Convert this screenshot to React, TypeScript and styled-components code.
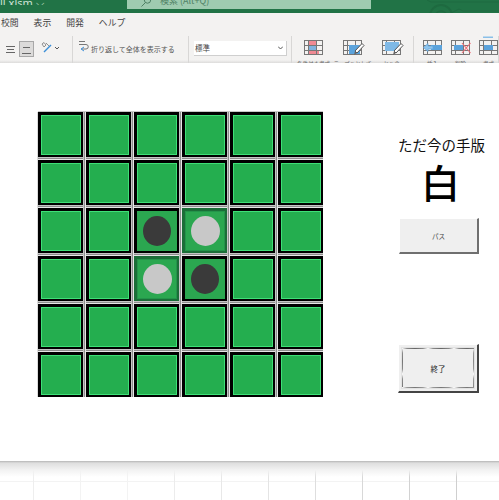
import React from "react";
import styled, { createGlobalStyle } from "styled-components";

const Global = createGlobalStyle`
  html, body { margin: 0; padding: 0; background: #fff; }
  body { width: 499px; height: 500px; overflow: hidden; font-family: "Noto Sans CJK JP", "Liberation Sans", sans-serif; }
`;

const Page = styled.div`
  width: 499px;
  height: 500px;
  display: flex;
  flex-direction: column;
  overflow: hidden;
`;

const TitleBar = styled.div`
  height: 13px;
  flex: none;
  background: #217346;
  display: flex;
  overflow: hidden;
  position: relative;
`;

const TitlePattern = styled.svg`
  position: absolute;
  right: 0;
  top: 0;
`;

const FileName = styled.div`
  width: 127px;
  flex: none;
  color: #cfe3d6;
  font: 11px/6px "Noto Sans", sans-serif;
  height: 5px;
  overflow: hidden;
  white-space: nowrap;
`;

const SearchBox = styled.div`
  width: 244px;
  height: 9px;
  flex: none;
  background: #9fcbb0;
  display: flex;
  gap: 8px;
  padding-left: 13px;
  box-sizing: border-box;
  overflow: hidden;
  color: #4f8165;
  font: 9px/9px "Noto Sans CJK JP", sans-serif;
  white-space: nowrap;
`;

const SearchText = styled.span`
  margin-top: -4px;
`;

const TabsRow = styled.div`
  height: 23px;
  flex: none;
  background: #f3f2f1;
  display: flex;
  align-items: center;
  padding: 0 0 3px 1px;
  box-sizing: border-box;
  gap: 15px;
`;

const Tab = styled.span`
  font-size: 8.8px;
  line-height: 12px;
  color: #444;
`;

const Ribbon = styled.div`
  height: 27px;
  flex: none;
  display: flex;
  align-items: stretch;
  background: linear-gradient(#f3f2f1 24px, #dddcdb 27px);
  overflow: hidden;
`;

const RibbonGroup = styled.div<{ $w: number; $gap?: number; $pad?: number }>`
  width: ${(p) => p.$w}px;
  flex: none;
  display: flex;
  align-items: flex-start;
  gap: ${(p) => p.$gap ?? 0}px;
  padding: 4px 0 0 ${(p) => p.$pad ?? 0}px;
  box-sizing: border-box;
  border-right: 1px solid #d8d7d6;
`;

const AlignButton = styled.div<{ $active?: boolean }>`
  width: 15px;
  height: 16px;
  margin-top: 1px;
  box-sizing: border-box;
  border: 1px solid ${(p) => (p.$active ? "#a8a8a8" : "transparent")};
  background: ${(p) => (p.$active ? "#dcdbda" : "transparent")};
  display: flex;
  align-items: ${(p) => (p.$active ? "flex-end" : "center")};
  padding-bottom: ${(p) => (p.$active ? 2 : 0)}px;
  justify-content: center;
`;

const WrapLabel = styled.span`
  font-size: 7px;
  line-height: 10px;
  color: #555;
  white-space: nowrap;
  margin: 4px 0 0 3px;
`;

const FormatBox = styled.div`
  width: 93px;
  height: 15px;
  margin: 1px 0 0 5px;
  background: #fff;
  border: 1px solid #cfcfcf;
  border-width: 0 1px 1px 0;
  box-sizing: border-box;
  font-size: 7.5px;
  line-height: 14px;
  color: #444;
  padding: 0 3px 0 1px;
  display: flex;
  justify-content: space-between;
  align-items: center;
`;

const CommandItem = styled.div`
  width: 19px;
  flex: none;
  display: flex;
  flex-direction: column;
  align-items: center;
`;

const CommandLabel = styled.span`
  font-size: 5.5px;
  line-height: 8px;
  margin-top: 5px;
  color: #666;
  white-space: nowrap;
`;

const RibbonIcon = styled.svg`
  flex: none;
  display: block;
  overflow: visible;
`;

const Sheet = styled.div`
  height: 398px;
  flex: none;
  background: #fff;
  display: flex;
  align-items: flex-start;
  padding: 49px 0 0 38px;
  box-sizing: border-box;
`;

const Board = styled.div`
  display: grid;
  grid-template-columns: repeat(6, 45px);
  grid-auto-rows: 45px;
  gap: 3px;
  background:
    repeating-linear-gradient(90deg, transparent 0 45px, #c4c4c4 45px 46px, #8e8e8e 46px 47px, #e6e6e6 47px 48px),
    repeating-linear-gradient(180deg, transparent 0 45px, #c4c4c4 45px 46px, #8e8e8e 46px 47px, #e6e6e6 47px 48px);
  box-shadow: 0 -1px 0 #c8c8c8, -1px 0 0 #dcdcdc;
`;

const variants = {
  plain: { edge: "#000", fill: "#24ae4f", glow: "#3ee077" },
  black: { edge: "#000", fill: "#2ba750", glow: "#2ba750" },
  white: { edge: "#1b6e38", fill: "#2ba750", glow: "#23954a" },
};

const Square = styled.div<{ $kind: keyof typeof variants }>`
  width: 45px;
  height: 45px;
  box-sizing: border-box;
  background: ${(p) => variants[p.$kind].fill};
  border-style: solid;
  border-width: 3px 2px 2px 3px;
  border-color: ${(p) => variants[p.$kind].edge};
  box-shadow: inset 0 0 0 1px ${(p) => variants[p.$kind].glow};
  display: flex;
  align-items: center;
  justify-content: center;
`;

const Disc = styled.div<{ $white?: boolean }>`
  width: ${(p) => (p.$white ? 29 : 28)}px;
  height: 30px;
  border-radius: 50%;
  background: ${(p) => (p.$white ? "#c8c8c8" : "#3a3a3a")};
`;

const Side = styled.div`
  width: 90px;
  margin-left: 75px;
  padding-top: 23px;
  display: flex;
  flex-direction: column;
  align-items: flex-start;
`;

const TurnLabel = styled.div`
  font-size: 14.5px;
  line-height: 20px;
  color: #111;
  white-space: nowrap;
`;

const TurnValue = styled.div`
  font-size: 39px;
  line-height: 50px;
  color: #000;
  margin: 1px 0 0 23px;
  font-weight: 500;
`;

const PassButton = styled.button`
  width: 80px;
  height: 36px;
  margin: 12px 0 0 1px;
  padding: 0;
  background: #efefef;
  border: none;
  border-top: 1px solid #fff;
  border-left: 1px solid #fff;
  border-right: 2px solid #6f6f6f;
  border-bottom: 2px solid #6f6f6f;
  font: 6.5px "Noto Sans CJK JP", sans-serif;
  color: #444;
`;

const EndButton = styled.button`
  width: 81px;
  height: 49px;
  margin-top: 90px;
  padding: 0;
  background: #efefef;
  border: none;
  border-top: 1px solid #fff;
  border-left: 1px solid #fff;
  border-right: 2px solid #444;
  border-bottom: 2px solid #444;
  font: 7.5px "Noto Sans CJK JP", sans-serif;
  color: #222;
  position: relative;
  &::before {
    content: "";
    position: absolute;
    inset: 2px;
    border: 1px solid #e2e2e2;
    background:
      repeating-linear-gradient(90deg, #fff, #8a8a8a 5px, #666 13px, #8a8a8a 21px, #fff 26px) top / 100% 1px no-repeat,
      repeating-linear-gradient(90deg, #fff, #9a9a9a 5px, #777 13px, #9a9a9a 21px, #fff 26px) bottom / 100% 1px no-repeat,
      repeating-linear-gradient(180deg, #fff, #8a8a8a 5px, #777 13px, #8a8a8a 21px, #fff 26px) left / 1px 100% no-repeat,
      repeating-linear-gradient(180deg, #fff, #9a9a9a 5px, #888 13px, #9a9a9a 21px, #fff 26px) right / 1px 100% no-repeat;
    background-clip: padding-box;
  }
`;

const GridFoot = styled.div`
  flex: 1;
  display: flex;
  position: relative;
  background: repeating-linear-gradient(180deg, transparent 0 20.5px, #f3f3f3 20.5px 21.5px) 0 0 / 100% 39px;
  &::after {
    content: "";
    position: absolute;
    inset: 0;
    background: linear-gradient(#b5b5b5, #dedede 2px, #f2f2f2 9px, rgba(255,255,255,0) 16px);
  }
`;

const GridColumn = styled.div<{ $w: number; $line: string }>`
  width: ${(p) => p.$w}px;
  flex: none;
  box-sizing: border-box;
  border-right: 1px solid ${(p) => p.$line};
`;

const Glass = () => (
  <svg width="12" height="9" viewBox="0 0 12 9" style={{ flex: "none" }}>
    <circle cx="7.5" cy="0" r="3.2" fill="none" stroke="#4f8165" strokeWidth="1" />
    <path d="M5 3 L1.5 6.5" stroke="#4f8165" strokeWidth="1" />
  </svg>
);

const AlignGlyph = ({ bottom }: { bottom?: boolean }) => (
  <svg width="9" height="8" viewBox="0 0 9 8">
    {bottom ? (
      <path d="M1 1.5h7M0 7.5h9" stroke="#666" strokeWidth="1" />
    ) : (
      <path d="M0 1.5h9M1 4.5h7M0 7.5h9" stroke="#666" strokeWidth="1" />
    )}
  </svg>
);

const TableFrame = () => (
  <g stroke="#777" strokeWidth="1" fill="none">
    <rect x="0.5" y="0.5" width="18" height="14" />
    <path d="M4.5 0.5v14M12.5 0.5v14M0.5 5.5h18M0.5 10.5h18" />
  </g>
);

const Brush = () => (
  <g>
    <path d="M12 11 L19 3.5 L21 5.5 L14 13 Z" fill="#fff" stroke="#555" strokeWidth="1" />
    <path d="M12 11 L14 13 L11 15 Z" fill="#666" />
  </g>
);

const CondIcon = () => (
  <RibbonIcon width="19" height="15" viewBox="0 0 19 15">
    <rect x="4" y="0" width="8" height="5" fill="#f08a94" />
    <rect x="4" y="5" width="8" height="5" fill="#7fb3e0" />
    <rect x="4" y="10" width="11" height="5" fill="#f08a94" />
    <TableFrame />
  </RibbonIcon>
);

const TableFormatIcon = () => (
  <RibbonIcon width="19" height="15" viewBox="0 0 19 15">
    <TableFrame />
    <rect x="6" y="5" width="11" height="9" fill="#5ba3dc" />
    <Brush />
  </RibbonIcon>
);

const CellStyleIcon = () => (
  <RibbonIcon width="19" height="15" viewBox="0 0 19 15">
    <TableFrame />
    <rect x="3" y="2" width="14" height="9" fill="#7fb9e6" />
    <Brush />
  </RibbonIcon>
);

const InsertIcon = () => (
  <RibbonIcon width="19" height="15" viewBox="0 0 19 15">
    <TableFrame />
    <rect x="8" y="5" width="11" height="5" fill="#5ba3dc" />
    <path d="M0.5 7.5 L5 3.5 V6 H10 V9 H5 V11.5 Z" fill="#8ec4ec" stroke="#5ba3dc" strokeWidth="0.7" />
  </RibbonIcon>
);

const DeleteIcon = () => (
  <RibbonIcon width="19" height="15" viewBox="0 0 19 15">
    <TableFrame />
    <rect x="3" y="5" width="9" height="5" fill="#5ba3dc" />
    <path d="M11 3 L19.5 13 M19.5 3 L11 13" stroke="#ef6b74" strokeWidth="1.1" />
  </RibbonIcon>
);

const SheetFormatIcon = () => (
  <RibbonIcon width="19" height="15" viewBox="0 0 19 15">
    <rect x="4" y="-3.5" width="10" height="1.5" fill="#8abfe8" />
    <TableFrame />
    <rect x="5" y="5" width="9" height="5" fill="#5ba3dc" />
  </RibbonIcon>
);

const board = ["......", "......", "..bw..", "..wb..", "......", "......"];

const columnLines = ["#eeeeee", "#f3f3f3", "#f3f3f3", "#ececec", "#e8e8e8", "#e4e4e4", "#dedede", "#d8d8d8", "#d2d2d2", "#cfcfcf"];

export default function App() {
  return (
    <Page>
      <Global />
      <TitleBar>
        <FileName>ll.xlsm ⌵</FileName>
        <SearchBox>
          <Glass />
          <SearchText>検索 (Alt+Q)</SearchText>
        </SearchBox>
        <TitlePattern width="128" height="13" viewBox="0 0 128 13">
          <circle cx="70" cy="16" r="11" fill="none" stroke="#1e6a40" strokeWidth="2" />
          <circle cx="70" cy="17" r="6" fill="none" stroke="#1e6a40" strokeWidth="1.5" />
          <path d="M56 0 L60 2 H128 M80 13 L88 9 L92 11 H128" fill="none" stroke="#1e6a40" strokeWidth="1" />
        </TitlePattern>
      </TitleBar>
      <TabsRow>
        <Tab>校閲</Tab>
        <Tab>表示</Tab>
        <Tab>開発</Tab>
        <Tab>ヘルプ</Tab>
      </TabsRow>
      <Ribbon>
        <RibbonGroup $w={73} $pad={3} $gap={1}>
          <AlignButton><AlignGlyph /></AlignButton>
          <AlignButton $active><AlignGlyph bottom /></AlignButton>
          <RibbonIcon width="18" height="13" viewBox="0 0 18 13" style={{ marginTop: 2, marginLeft: 6 }}>
            <path d="M1 2 L3 0.5 L5 3 L3 5 Z M5 1 L9 5" stroke="#777" fill="none" strokeWidth="0.8" />
            <path d="M3 10 L10 3" stroke="#3d8fd8" strokeWidth="1.5" />
            <path d="M14 5 l2 2 l2 -2" stroke="#555" fill="none" />
          </RibbonIcon>
        </RibbonGroup>
        <RibbonGroup $w={116} $pad={6}>
          <RibbonIcon width="9" height="12" viewBox="0 0 9 12">
            <path d="M0 1.5h6M0 4.5h7a2 2 0 0 1 0 4.5H3" stroke="#777" fill="none" />
            <path d="M5 7 L2 9 L5 11" stroke="#3d8fd8" fill="none" />
          </RibbonIcon>
          <WrapLabel>折り返して全体を表示する</WrapLabel>
        </RibbonGroup>
        <RibbonGroup $w={103}>
          <FormatBox>
            <span>標準</span>
            <svg width="5" height="4" viewBox="0 0 5 4"><path d="M0 0.5 L2.5 3 L5 0.5" stroke="#555" fill="none" /></svg>
          </FormatBox>
        </RibbonGroup>
        <RibbonGroup $w={122} $pad={12} $gap={20}>
          <CommandItem><CondIcon /><CommandLabel>条件付き書式</CommandLabel></CommandItem>
          <CommandItem><TableFormatIcon /><CommandLabel>テーブルとして</CommandLabel></CommandItem>
          <CommandItem><CellStyleIcon /><CommandLabel>セルの</CommandLabel></CommandItem>
        </RibbonGroup>
        <RibbonGroup $w={85} $pad={9} $gap={9}>
          <CommandItem><InsertIcon /><CommandLabel>挿入</CommandLabel></CommandItem>
          <CommandItem><DeleteIcon /><CommandLabel>削除</CommandLabel></CommandItem>
          <CommandItem><SheetFormatIcon /><CommandLabel>書式</CommandLabel></CommandItem>
        </RibbonGroup>
      </Ribbon>
      <Sheet>
        <Board>
          {board.map((row, r) =>
            row.split("").map((c, i) => (
              <Square key={`${r}-${i}`} $kind={c === "w" ? "white" : c === "b" ? "black" : "plain"}>
                {c !== "." && <Disc $white={c === "w"} />}
              </Square>
            ))
          )}
        </Board>
        <Side>
          <TurnLabel>ただ今の手版</TurnLabel>
          <TurnValue>白</TurnValue>
          <PassButton>パス</PassButton>
          <EndButton>終了</EndButton>
        </Side>
      </Sheet>
      <GridFoot>
        {columnLines.map((line, i) => (
          <GridColumn key={i} $w={i === 0 ? 34 : 47} $line={line} />
        ))}
      </GridFoot>
    </Page>
  );
}
